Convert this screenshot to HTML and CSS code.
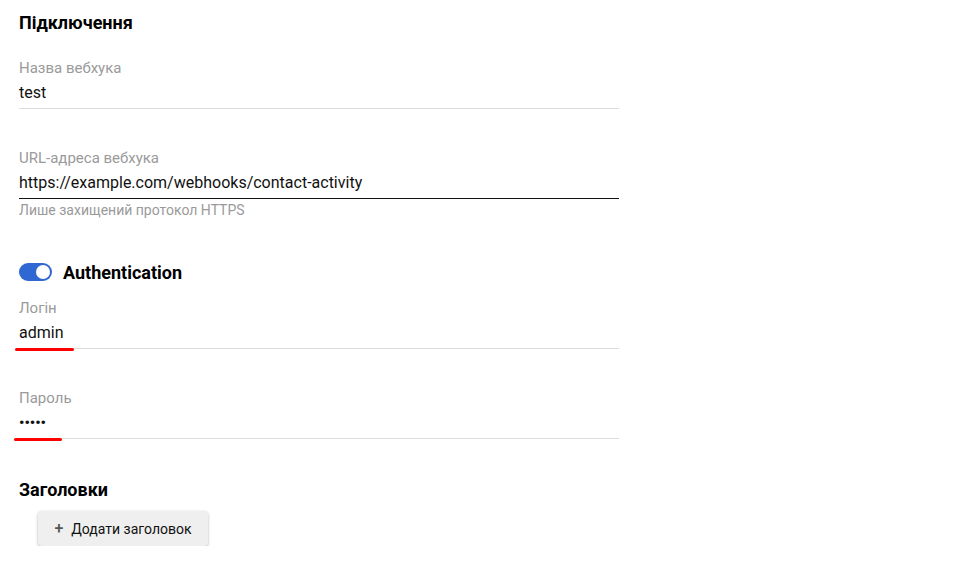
FILE: index.html
```html
<!DOCTYPE html>
<html lang="uk">
<head>
<meta charset="utf-8">
<link rel="stylesheet" href="styles.css">
</head>
<body>
<div class="page">
  <h2 class="section-title">Підключення</h2>

  <div class="field field-first">
    <div class="label">Назва вебхука</div>
    <div class="value">test</div>
  </div>

  <div class="field field-gap">
    <div class="label">URL-адреса вебхука</div>
    <div class="value value-active">https://example.com/webhooks/contact-activity</div>
    <div class="helper">Лише захищений протокол HTTPS</div>
  </div>

  <div class="toggle-row">
    <span class="toggle"><span class="knob"></span></span>
    <span class="toggle-label">Authentication</span>
  </div>

  <div class="field field-login">
    <div class="label">Логін</div>
    <div class="value">admin<span class="mark mark-login"></span></div>
  </div>

  <div class="field field-gap">
    <div class="label">Пароль</div>
    <div class="value value-dots">•••••<span class="mark mark-pass"></span></div>
  </div>

  <h2 class="section-title headers-title">Заголовки</h2>

  <button class="add-btn"><span class="plus">+</span>Додати заголовок</button>
</div>
</body>
</html>
```

FILE: styles.css
```css
html, body {
  margin: 0;
  padding: 0;
  background: #ffffff;
}
body {
  font-family: Roboto, "Noto Sans", sans-serif;
  color: #111;
}
.page {
  padding: 12px 0 0 19px;
  width: 600px;
}
.section-title {
  margin: 0;
  font-size: 18px;
  line-height: 22px;
  font-weight: 700;
  color: #000;
}
.field {
  position: relative;
}
.field-first { margin-top: 26px; }
.field-gap { margin-top: 41px; }
.field-login { margin-top: 16px; }
.label {
  font-size: 15px;
  line-height: 16px;
  color: #9a9a9a;
  margin-bottom: 5px;
}
.value {
  position: relative;
  font-size: 16px;
  line-height: 24px;
  padding-bottom: 3px;
  border-bottom: 1px solid #dcdcdc;
  color: #111;
}
.value-active {
  border-bottom-color: #111;
}
.value-dots {
  font-size: 15px;
  font-weight: 700;
}
.helper {
  margin-top: 3px;
  font-size: 14px;
  line-height: 16px;
  color: #9a9a9a;
}
.mark {
  position: absolute;
  left: -4px;
  bottom: -3px;
  height: 3px;
  border-radius: 2px;
  background: #ff0000;
}
.mark-login { width: 59px; }
.mark-pass { width: 48px; left: -5px; }
.toggle-row {
  margin-top: 42px;
  display: flex;
  align-items: center;
  gap: 11px;
  height: 24px;
}
.toggle {
  display: inline-flex;
  align-items: center;
  justify-content: flex-end;
  width: 33px;
  height: 18px;
  border-radius: 9px;
  background: #2f67d3;
  box-sizing: border-box;
  padding: 2px;
}
.knob {
  width: 14px;
  height: 14px;
  border-radius: 50%;
  background: #fff;
}
.toggle-label {
  font-size: 18px;
  font-weight: 700;
  color: #000;
}
.headers-title {
  margin-top: 40px;
}
.add-btn {
  margin: 10px 0 0 19px;
  width: 170px;
  height: 35px;
  border: none;
  border-radius: 4px;
  background: #efefef;
  box-shadow: 0 1px 3px rgba(0,0,0,0.3);
  font-family: Roboto, "Noto Sans", sans-serif;
  font-size: 14px;
  color: #111;
  display: flex;
  align-items: center;
  justify-content: center;
  padding: 0;
  cursor: pointer;
}
.plus {
  font-size: 16px;
  color: #555;
  margin-right: 8px;
  font-weight: 500;
}
```
